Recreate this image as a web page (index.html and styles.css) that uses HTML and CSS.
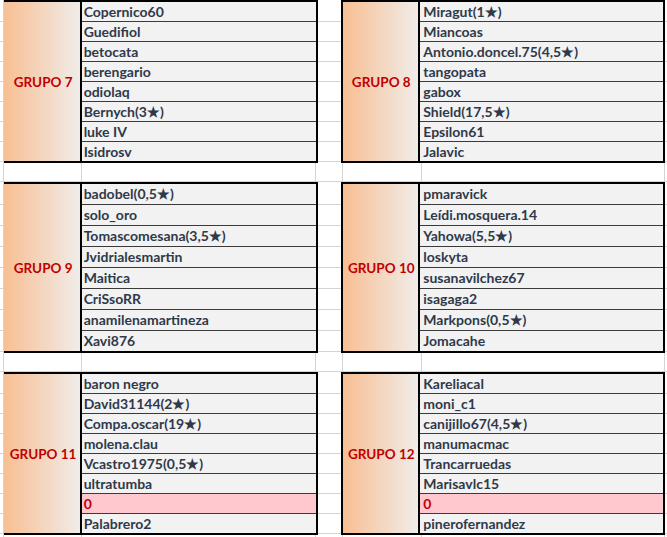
FILE: index.html
```html
<!DOCTYPE html>
<html>
<head>
<meta charset="utf-8">
<link rel="stylesheet" href="styles.css">
</head>
<body>
<div class="sheet">
  <div class="band p20">
    <div class="cola"></div>
    <div class="block left">
      <div class="label">GRUPO 7</div>
      <div class="names">
        <div class="row">Copernico60</div>
        <div class="row">Guedifiol</div>
        <div class="row">betocata</div>
        <div class="row">berengario</div>
        <div class="row">odiolaq</div>
        <div class="row">Bernych(3★)</div>
        <div class="row">luke IV</div>
        <div class="row">Isidrosv</div>
      </div>
    </div>
    <div class="gapcol"></div>
    <div class="block right">
      <div class="label">GRUPO 8</div>
      <div class="names">
        <div class="row">Miragut(1★)</div>
        <div class="row">Miancoas</div>
        <div class="row">Antonio.doncel.75(4,5★)</div>
        <div class="row">tangopata</div>
        <div class="row">gabox</div>
        <div class="row">Shield(17,5★)</div>
        <div class="row">Epsilon61</div>
        <div class="row">Jalavic</div>
      </div>
    </div>
    <div class="tail"></div>
  </div>

  <div class="blank">
    <div class="c c1"></div><div class="c c2"></div><div class="c c3"></div><div class="c c4"></div><div class="c c5"></div><div class="c c6"></div><div class="c c7"></div>
  </div>

  <div class="band p21">
    <div class="cola"></div>
    <div class="block left">
      <div class="label">GRUPO 9</div>
      <div class="names">
        <div class="row">badobel(0,5★)</div>
        <div class="row">solo_oro</div>
        <div class="row">Tomascomesana(3,5★)</div>
        <div class="row">Jvidrialesmartin</div>
        <div class="row">Maitica</div>
        <div class="row">CriSsoRR</div>
        <div class="row">anamilenamartineza</div>
        <div class="row">Xavi876</div>
      </div>
    </div>
    <div class="gapcol"></div>
    <div class="block right">
      <div class="label">GRUPO 10</div>
      <div class="names">
        <div class="row">pmaravick</div>
        <div class="row">Leídi.mosquera.14</div>
        <div class="row">Yahowa(5,5★)</div>
        <div class="row">loskyta</div>
        <div class="row">susanavilchez67</div>
        <div class="row">isagaga2</div>
        <div class="row">Markpons(0,5★)</div>
        <div class="row">Jomacahe</div>
      </div>
    </div>
    <div class="tail"></div>
  </div>

  <div class="blank">
    <div class="c c1"></div><div class="c c2"></div><div class="c c3"></div><div class="c c4"></div><div class="c c5"></div><div class="c c6"></div><div class="c c7"></div>
  </div>

  <div class="band p20">
    <div class="cola"></div>
    <div class="block left">
      <div class="label">GRUPO 11</div>
      <div class="names">
        <div class="row">baron negro</div>
        <div class="row">David31144(2★)</div>
        <div class="row">Compa.oscar(19★)</div>
        <div class="row">molena.clau</div>
        <div class="row">Vcastro1975(0,5★)</div>
        <div class="row">ultratumba</div>
        <div class="row bad">0</div>
        <div class="row">Palabrero2</div>
      </div>
    </div>
    <div class="gapcol"></div>
    <div class="block right">
      <div class="label">GRUPO 12</div>
      <div class="names">
        <div class="row">Kareliacal</div>
        <div class="row">moni_c1</div>
        <div class="row">canijillo67(4,5★)</div>
        <div class="row">manumacmac</div>
        <div class="row">Trancarruedas</div>
        <div class="row">Marisavlc15</div>
        <div class="row bad">0</div>
        <div class="row">pinerofernandez</div>
      </div>
    </div>
    <div class="tail"></div>
  </div>
  <div class="blank last">
    <div class="c c1"></div><div class="c c2"></div><div class="c c3"></div><div class="c c4"></div><div class="c c5"></div><div class="c c6"></div><div class="c c7"></div>
  </div>
</div>
</body>
</html>
```

FILE: styles.css
```css
* { box-sizing: border-box; }
html, body { margin: 0; padding: 0; background: #fff; }
body {
  font-family: Lato, "Open Sans", sans-serif;
  font-weight: 700;
  font-size: 14px;
  color: #2f394a;
  width: 667px;
  height: 537px;
  overflow: hidden;
}
.sheet { display: flex; flex-direction: column; width: 667px; }

.band { display: flex; }
.p20 { --pitch: 20px; }
.p21 { --pitch: 21px; }

.cola {
  width: 4px;
  border-right: 1px solid #d4d4d4;
  background: repeating-linear-gradient(to bottom, transparent 0, transparent calc(var(--pitch) - 1px), #d4d4d4 calc(var(--pitch) - 1px), #d4d4d4 var(--pitch));
  background-position: 0 2px;
}
.gapcol {
  width: 27px;
  background: repeating-linear-gradient(to bottom, transparent 0, transparent calc(var(--pitch) - 1px), #d4d4d4 calc(var(--pitch) - 1px), #d4d4d4 var(--pitch));
  background-position: 0 2px;
}
.tail {
  width: 2px;
  background: repeating-linear-gradient(to bottom, transparent 0, transparent calc(var(--pitch) - 1px), #d4d4d4 calc(var(--pitch) - 1px), #d4d4d4 var(--pitch));
  background-position: 0 2px;
}

.block {
  display: flex;
  border-top: 2px solid #000;
  border-bottom: 2px solid #000;
  border-right: 2px solid #000;
}
.block.right { border-left: 2px solid #000; }

.label {
  display: flex;
  align-items: center;
  justify-content: center;
  color: #c00000;
  font-size: 13.5px;
  background: linear-gradient(to right, #f8bf93, #f0ece9);
  border-right: 2px solid #000;
}
.left .label { width: 78px; padding-left: 3px; }
.right .label { width: 77px; padding-left: 1px; }

.names { display: flex; flex-direction: column; background: #f2f2f2; }
.left .names { width: 234px; }
.right .names { width: 243px; }

.row {
  height: var(--pitch);
  line-height: calc(var(--pitch) - 1px);
  border-bottom: 1px solid #3a3a3a;
  padding-left: 2px;
  white-space: nowrap;
}
.right .row { padding-left: 3px; }
.row:last-child { border-bottom: none; height: calc(var(--pitch) - 1px); }
.row.bad { background: #ffc7ce; color: #c0000c; }

.blank { display: flex; height: 19px; }
.blank.last { height: 4px; }
.blank .c { height: 100%; border-right: 1px solid #d4d4d4; border-bottom: 1px solid #d4d4d4; }
.c1 { width: 4px; }
.c2 { width: 78px; }
.c3 { width: 234px; }
.c4 { width: 27px; }
.c5 { width: 79px; }
.c6 { width: 243px; }
.c7 { width: 2px; border-right: none !important; }
```
